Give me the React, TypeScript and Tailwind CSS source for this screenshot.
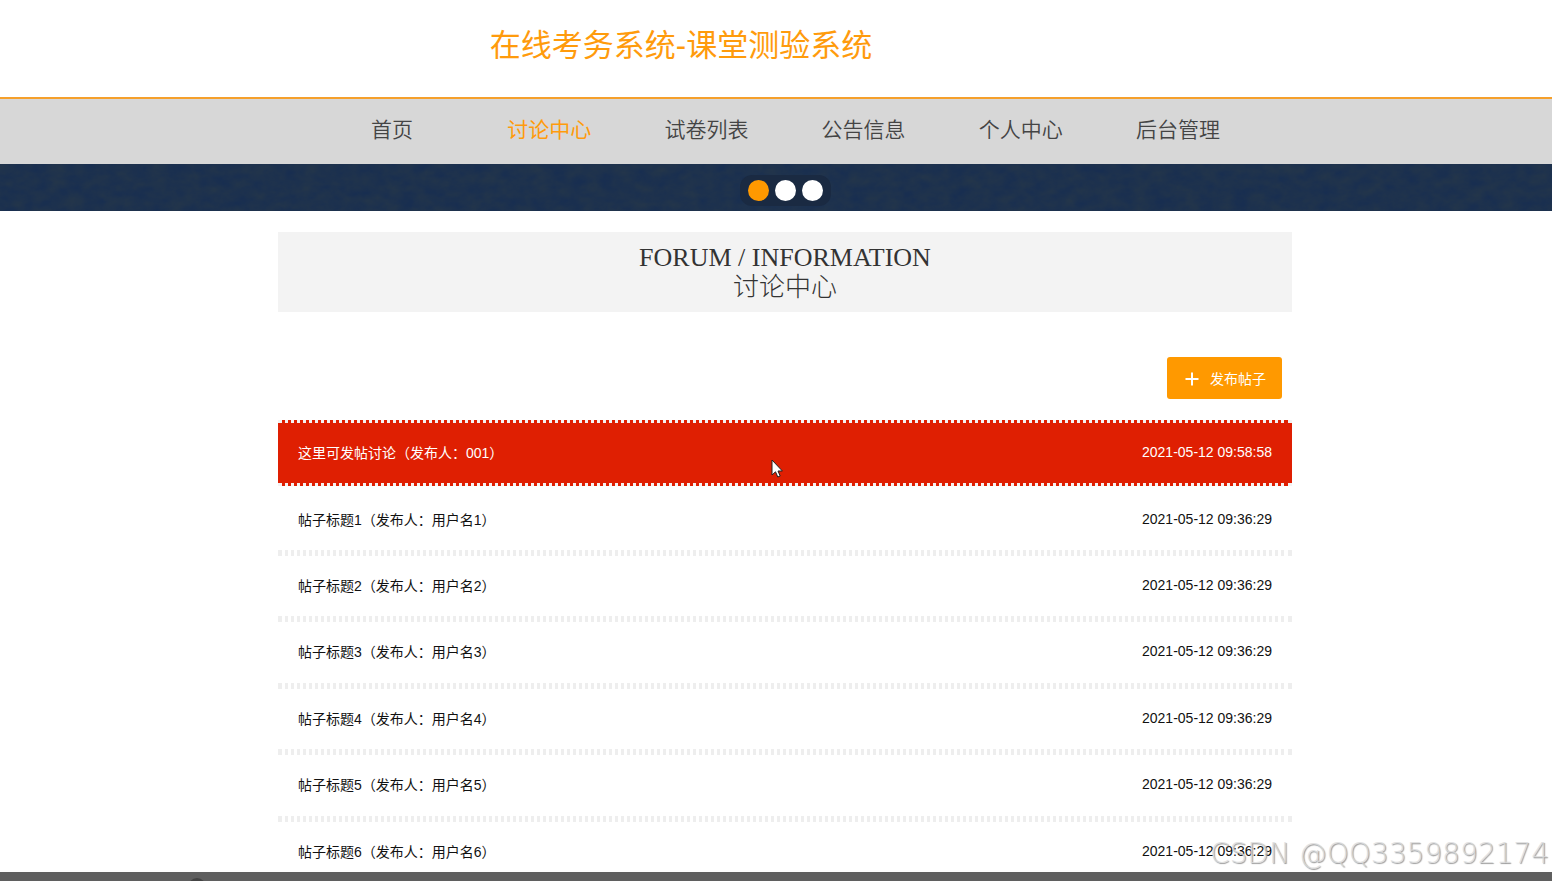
const navItems = ['首页', '讨论中心', '试卷列表', '公告信息', '个人中心', '后台管理'];

const posts = [
  { title: '这里可发帖讨论', user: '001', time: '2021-05-12 09:58:58' },
  { title: '帖子标题1', user: '用户名1', time: '2021-05-12 09:36:29' },
  { title: '帖子标题2', user: '用户名2', time: '2021-05-12 09:36:29' },
  { title: '帖子标题3', user: '用户名3', time: '2021-05-12 09:36:29' },
  { title: '帖子标题4', user: '用户名4', time: '2021-05-12 09:36:29' },
  { title: '帖子标题5', user: '用户名5', time: '2021-05-12 09:36:29' },
  { title: '帖子标题6', user: '用户名6', time: '2021-05-12 09:36:29' },
];

function Header() {
  return (
    <header className="h-[99px] border-b-2 border-[#f5a02c] pt-[25px] pr-[190px]">
      <h1 className="text-center text-[31px] leading-[42px] text-[#ff9b0c]">在线考务系统-课堂测验系统</h1>
    </header>
  );
}

function NavBar() {
  return (
    <nav className="bg-[#d7d7d7] pl-[18px]">
      <ul className="mx-auto grid h-[65px] max-w-[943px] grid-cols-6">
        {navItems.map((item) => (
          <li key={item} className="pt-[13px] text-center">
            <a
              href="#"
              className={
                item === '讨论中心'
                  ? 'text-[21px] leading-9 text-[#ff9b0c]'
                  : 'text-[21px] leading-9 font-[350] text-[#444444]'
              }
            >
              {item}
            </a>
          </li>
        ))}
      </ul>
    </nav>
  );
}

function Banner() {
  return (
    <section className="relative flex h-[47px] justify-center bg-[#182e50] pt-[11px] pl-[18px]">
      {/* Paper texture */}
      <svg className="absolute inset-0 h-full w-full" aria-hidden="true">
        <filter id="paper" x="0" y="0" width="100%" height="100%" colorInterpolationFilters="sRGB">
          <feTurbulence type="fractalNoise" baseFrequency="0.06 0.09" numOctaves="5" seed="4" />
          <feColorMatrix values="0 0 0 0 0.14  0 0 0 0 0.21  0 0 0 0 0.29  1.4 0 0 0 -0.25" />
        </filter>
        <rect width="100%" height="100%" filter="url(#paper)" />
      </svg>
      <div className="relative flex h-[31px] items-center gap-[6px] rounded-xl bg-[#1a2a42] px-2">
        <button aria-label="1" className="size-[21px] rounded-full bg-[#ff9900]" />
        <button aria-label="2" className="size-[21px] rounded-full bg-white" />
        <button aria-label="3" className="size-[21px] rounded-full bg-white" />
      </div>
    </section>
  );
}

function PostList() {
  return (
    <ul className="mt-[21px] grid min-h-[465px] auto-rows-fr text-sm">
      {posts.map((post, i) => (
        <li
          key={post.title}
          className={
            i === 0
              ? 'border-y-[3px] border-dotted border-[#f3f3f3] bg-[#df1f02] text-white'
              : 'border-y-[3px] border-dotted border-[#eeeeee] text-[#111111] nth-2:border-t-transparent'
          }
        >
          <a href="#" className="flex h-full items-center justify-between px-5">
            <span>
              {post.title}（发布人：{post.user}）
            </span>
            <time className="pb-[2px]">{post.time}</time>
          </a>
        </li>
      ))}
    </ul>
  );
}

export default function App() {
  return (
    <div className="relative h-screen w-full overflow-hidden bg-white font-['Liberation_Sans','Noto_Sans_CJK_SC',sans-serif]">
      <Header />
      <NavBar />
      <Banner />

      <main className="pl-[18px]">
        <div className="mx-auto max-w-[1014px] pt-[21px]">
          <h2 className="bg-[#f3f3f3] pt-[11px] pb-[9px] text-center font-['Liberation_Serif','Noto_Sans_CJK_SC',serif] text-[26px] leading-[30px] text-[#333333]">
            FORUM / INFORMATION
            <br />
            <span className="font-light">讨论中心</span>
          </h2>

          <div className="mt-[45px] flex justify-end pr-[10px]">
            <button className="flex h-[42px] items-center gap-[11px] rounded-[3px] bg-[#ff9900] pt-[2px] pr-4 pl-[18px] text-sm text-white">
              <svg viewBox="0 0 14 14" className="size-[14px]" fill="none" stroke="currentColor" strokeWidth="2">
                <path d="M7 0.5v13M0.5 7h13" />
              </svg>
              发布帖子
            </button>
          </div>

          <PostList />
        </div>
      </main>

      {/* Mouse pointer */}
      <svg viewBox="0 0 12 19" className="absolute top-[459px] left-[771px] h-[19px] w-3">
        <path d="M1 1v15l3.5-3.2 2.3 5.2 2.4-1-2.2-5h4.4z" fill="#fff" stroke="#222" strokeWidth="1" />
      </svg>

      <div className="absolute right-[3px] bottom-2 font-['DejaVu_Sans',sans-serif] text-[28px] leading-[38px] font-extralight text-[#dddddd]/80 [text-shadow:1px_1px_1px_#999]">
        CSDN @QQ3359892174
      </div>

      <div className="absolute inset-x-0 bottom-0 h-[9px] overflow-hidden bg-[#5f5f5f]">
        <div className="mt-[6px] ml-[188px] size-[18px] rounded-full bg-[#444444]" />
      </div>
    </div>
  );
}
